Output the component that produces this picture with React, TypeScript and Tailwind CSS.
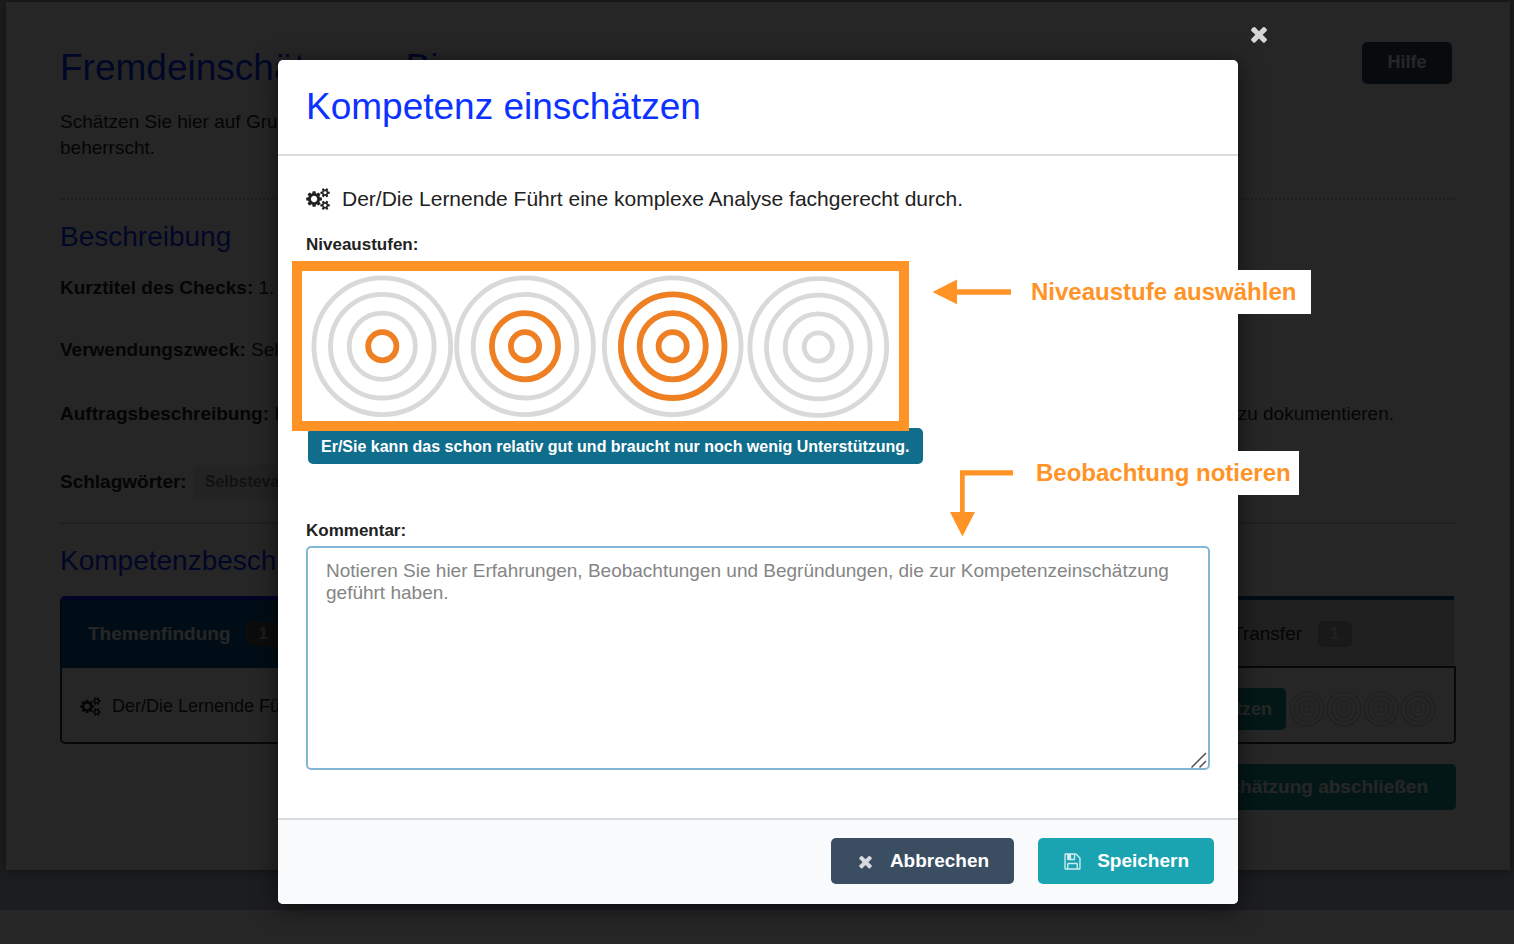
import React from "react";

const COGS =
  "M896 896q0-106-75-181t-181-75-181 75-75 181 75 181 181 75 181-75 75-181zm768 512q0-52-38-90t-90-38-90 38-38 90q0 53 37.5 90.5t90.5 37.5 90.5-37.5 37.5-90.5zm0-1024q0-52-38-90t-90-38-90 38-38 90q0 53 37.5 90.5t90.5 37.5 90.5-37.5 37.5-90.5zm-384 421v185q0 10-7 19.5t-16 10.5l-155 24q-11 35-32 76 34 48 90 115 7 11 7 20 0 12-7 19-23 30-82.5 89.5t-78.5 59.5q-11 0-21-7l-115-90q-37 19-77 31-11 108-23 155-7 24-30 24h-186q-11 0-20-7.5t-10-17.5l-23-153q-34-10-75-31l-118 89q-7 7-20 7-11 0-21-8-144-133-144-160 0-9 7-19 10-14 41-53t47-61q-23-44-35-82l-152-24q-10-1-17-9.5t-7-19.5v-185q0-10 7-19.5t16-10.5l155-24q11-35 32-76-34-48-90-115-7-11-7-20 0-12 7-20 22-30 82-89t79-59q11 0 21 7l115 90q34-18 77-32 11-108 23-154 7-24 30-24h186q11 0 20 7.5t10 17.5l23 153q34 10 75 31l118-89q8-7 20-7 11 0 21 8 144 133 144 160 0 8-7 19-12 16-42 54t-45 60q23 48 34 82l152 23q10 2 17 10.5t7 19.5zm640 533v140q0 16-149 31-12 27-30 52 51 113 51 138 0 4-4 7-122 71-124 71-8 0-46-47t-52-68q-20 2-30 2t-30-2q-14 21-52 68t-46 47q-2 0-124-71-4-3-4-7 0-25 51-138-18-25-30-52-149-15-149-31v-140q0-16 149-31 13-29 30-52-51-113-51-138 0-4 4-7 4-2 35-20t59-34 30-16q8 0 46 46.5t52 67.5q20-2 30-2t30 2q51-71 92-112l6-2q4 0 124 70 4 3 4 7 0 25-51 138 17 23 30 52 149 15 149 31zm0-1024v140q0 16-149 31-12 27-30 52 51 113 51 138 0 4-4 7-122 71-124 71-8 0-46-47t-52-68q-20 2-30 2t-30-2q-14 21-52 68t-46 47q-2 0-124-71-4-3-4-7 0-25 51-138-18-25-30-52-149-15-149-31v-140q0-16 149-31 13-29 30-52-51-113-51-138 0-4 4-7 4-2 35-20t59-34 30-16q8 0 46 46.5t52 67.5q20-2 30-2t30 2q51-71 92-112l6-2q4 0 124 70 4 3 4 7 0 25-51 138 17 23 30 52 149 15 149 31z";
const TIMES =
  "M1490 1322q0 40-28 68l-136 136q-28 28-68 28t-68-28l-294-294-294 294q-28 28-68 28t-68-28l-136-136q-28-28-28-68t28-68l294-294-294-294q-28-28-28-68t28-68l136-136q28-28 68-28t68 28l294 294 294-294q28-28 68-28t68 28l136 136q28 28 28 68t-28 68l-294 294 294 294q28 28 28 68z";
const FLOPPY =
  "M512 1536h768v-384h-768v384zm896 0h128v-896q0-14-10-38.5t-20-34.5l-281-281q-10-10-34-20t-39-10v416q0 40-28 68t-68 28h-576q-40 0-68-28t-28-68v-416h-128v1280h128v-416q0-40 28-68t68-28h832q40 0 68 28t28 68v416zm-384-928v-320q0-13-9.5-22.5t-22.5-9.5h-192q-13 0-22.5 9.5t-9.5 22.5v320q0 13 9.5 22.5t22.5 9.5h192q13 0 22.5-9.5t9.5-22.5zm640 32v928q0 40-28 68t-68 28h-1344q-40 0-68-28t-28-68v-1344q0-40 28-68t68-28h928q40 0 88 20t76 48l280 280q28 28 48 76t20 88z";

function Glyph({ path, box = "0 0 1792 1792", className }: { path: string; box?: string; className: string }) {
  return (
    <svg viewBox={box} fill="currentColor" aria-hidden="true" className={className}>
      <path d={path} />
    </svg>
  );
}

const RADII = [14.1, 33.1, 51.8, 68.4];

function Rings({ cx, cy, filled }: { cx: number; cy: number; filled: number }) {
  return (
    <>
      {RADII.map((r, i) => (
        <circle
          key={r}
          cx={cx}
          cy={cy}
          r={r}
          fill="none"
          stroke={i < filled ? "#ee7f22" : "#d9d9d9"}
          strokeWidth={i < filled ? 5.8 : 4.8}
        />
      ))}
    </>
  );
}

const levels = [
  { width: 142, cx: 71.3, cy: 75.2, filled: 1 },
  { width: 147, cx: 72, cy: 75.2, filled: 2 },
  { width: 146, cx: 72.7, cy: 75.2, filled: 3 },
  { width: 144, cx: 72.3, cy: 76, filled: 0 },
];

function Background() {
  return (
    <div className="bg-[#bcc2cc] pt-0.5 pr-1 pb-10 pl-1.5">
      <main className="bg-white px-[54px] pt-10 pb-[60px] text-[19px] leading-[26px] text-[#222] shadow-[0_0_12px_rgba(0,0,0,0.5)]">
        <div className="flex items-start justify-between pr-1">
          <div>
            <h1 className="mt-1 text-[37px] leading-[44px] text-[#0b32ff]">Fremdeinschätzung: Bi</h1>
            <p className="mt-[19px]">
              Schätzen Sie hier auf Grundlage
              <br />
              beherrscht.
            </p>
          </div>
          <button type="button" className="h-[42px] w-[90px] rounded-[5px] bg-[#34495e] pb-0.5 text-[18px] font-bold text-white">
            Hilfe
          </button>
        </div>

        <hr className="mt-[37px] border-0 border-t-2 border-dotted border-[#c8c8c8]" />
        <h2 className="mt-[19px] text-[28px] leading-9 text-[#0b32ff]">Beschreibung</h2>
        <p className="mt-5">
          <b>Kurztitel des Checks:</b> 1. Selbst
        </p>
        <p className="mt-9">
          <b>Verwendungszweck:</b> Selbst
        </p>
        <p className="mt-[38px] flex justify-between pr-[62px]">
          <span>
            <b>Auftragsbeschreibung:</b> In
          </span>
          <span>zu dokumentieren.</span>
        </p>
        <div className="mt-[38px] flex items-center gap-1.5">
          <b>Schlagwörter:</b>
          <span className="rounded-[5px] bg-[#ececec] px-3 py-1 text-[16px] font-bold text-[#7a7a7a]">Selbstevaluation</span>
        </div>
        <hr className="mt-[23px] border-0 border-t-2 border-[#d4d4d4]" />
        <h2 className="mt-[19px] text-[28px] leading-9 text-[#0b32ff]">Kompetenzbeschreibung</h2>

        <section className="mt-[17px]">
          <div className="flex pr-0.5">
            <div className="relative z-10 flex h-[72px] w-[348px] items-center gap-4 rounded-tl-[5px] border-t-4 border-l-2 border-t-[#1010ff] border-l-[#00406c] bg-[#005692] px-[26px] font-bold text-white">
              Themenfindung
              <span className="rounded-[5px] bg-[#555] px-3 text-[17px] leading-6 text-[#bbb]">1</span>
            </div>
            <div className="flex-1 border-t-4 border-[#005692] bg-[#d6d6d6]" />
            <div className="flex h-[72px] w-[250px] items-center gap-4 border-t-4 border-[#005692] bg-[#d6d6d6] px-7">
              Transfer
              <span className="rounded-[5px] bg-[#a5a5a5] px-3 text-[17px] font-bold text-[#ddd]">1</span>
            </div>
          </div>
          <div className="relative -mt-0.5 flex items-center justify-between rounded-b-[5px] border-2 border-[#2c3e50] px-[18px] pt-5 pb-3">
            <div className="flex items-center gap-[11px] pb-1.5 text-[18px]">
              <Glyph path={COGS} box="0 0 1920 1792" className="h-[19px] w-[21px]" />
              Der/Die Lernende Führt
            </div>
            <div className="flex items-center gap-1">
              <button type="button" className="h-[42px] rounded-[5px] bg-[#109b94] px-3.5 text-[18px] font-bold text-white">
                Einschätzen
              </button>
              <svg viewBox="0 0 146 36" className="h-9 w-[146px]" aria-hidden="true">
                {[17, 54, 91, 128].map((x) => (
                  <g key={x} fill="none" stroke="#cfcfcf" strokeWidth="1.2">
                    <circle cx={x} cy="18" r="3.5" />
                    <circle cx={x} cy="18" r="8" />
                    <circle cx={x} cy="18" r="12.5" />
                    <circle cx={x} cy="18" r="17" />
                  </g>
                ))}
              </svg>
            </div>
          </div>
          <div className="mt-5 flex justify-end">
            <button type="button" className="h-[46px] rounded-[5px] bg-[#109b94] px-7 font-bold text-white">
              Fremdeinschätzung abschließen
            </button>
          </div>
        </section>
      </main>
    </div>
  );
}

function Annotations() {
  return (
    <>
      <svg viewBox="0 0 80 26" className="absolute top-[219px] left-[654px] h-[26px] w-20" aria-hidden="true">
        <path d="M0.5 13 25 0.5V10.3H79V15.7H25V25.2Z" fill="#ff9326" />
      </svg>
      <p className="absolute top-[210px] left-[745px] bg-white py-2 pr-[15px] pl-2 text-[24px] leading-7 font-bold whitespace-nowrap text-[#ff9326]">
        Niveaustufe auswählen
      </p>
      <svg viewBox="0 0 64 68" className="absolute top-[410px] left-[672px] h-[68px] w-16" aria-hidden="true">
        <path d="M63 0.2V5.6H14.7V42H25L12.4 66.5 0 42H10V0.2Z" fill="#ff9326" />
      </svg>
      <p className="absolute top-[391px] left-[750px] bg-white px-2 py-2 text-[24px] leading-7 font-bold whitespace-nowrap text-[#ff9326]">
        Beobachtung notieren
      </p>
    </>
  );
}

export default function App() {
  return (
    <div className="relative min-h-screen bg-white font-['Liberation_Sans',Arial,sans-serif]">
      <Background />

      <div className="absolute inset-0 z-20 flex items-start justify-center bg-black/85 pt-[60px] pl-0.5">
        <div
          role="dialog"
          aria-labelledby="dialog-title"
          className="relative w-full max-w-[960px] rounded-[5px] bg-white text-[#222] shadow-[0_4px_24px_rgba(0,0,0,0.6)]"
        >
          <button type="button" aria-label="Schließen" className="absolute -top-[38px] -right-[33px] text-[#d6d6d6]">
            <Glyph path={TIMES} className="size-6" />
          </button>

          <header className="border-b-2 border-[#dcdcdc] px-7 py-[25px]">
            <h1 id="dialog-title" className="text-[37px] leading-[44px] text-[#0b32ff]">
              Kompetenz einschätzen
            </h1>
          </header>

          <div className="px-7 pt-7 pb-12">
            <p className="flex items-center gap-3 text-[21px] leading-[30px]">
              <Glyph path={COGS} box="0 0 1920 1792" className="h-[22px] w-6" />
              Der/Die Lernende Führt eine komplexe Analyse fachgerecht durch.
            </p>
            <p className="mt-[19px] text-[17px] leading-6 font-bold">Niveaustufen:</p>
            <div className="relative z-10 mt-1 -ml-3.5 flex w-[617px] max-w-full border-10 border-[#ff9326] bg-white pl-[9px]">
              {levels.map((level, i) => (
                <button key={i} type="button" aria-label={`Niveaustufe ${i + 1}`}>
                  <svg
                    viewBox={`0 0 ${level.width} 150`}
                    className="block h-[150px]"
                    style={{ width: level.width }}
                    aria-hidden="true"
                  >
                    <Rings cx={level.cx} cy={level.cy} filled={level.filled} />
                  </svg>
                </button>
              ))}
            </div>
            <div className="-mt-[3px] ml-0.5 flex">
              <span className="rounded-[5px] bg-[#116d8c] px-[13px] pt-[7px] pb-[5px] text-[16px] leading-6 font-bold text-white">
                Er/Sie kann das schon relativ gut und braucht nur noch wenig Unterstützung.
              </span>
            </div>
            <label htmlFor="comment" className="mt-[55px] block text-[17px] leading-6 font-bold">
              Kommentar:
            </label>
            <div className="relative mt-[3px]">
              <textarea
                id="comment"
                placeholder="Notieren Sie hier Erfahrungen, Beobachtungen und Begründungen, die zur Kompetenzeinschätzung geführt haben."
                className="block h-[224px] w-full resize-none rounded-[5px] border-2 border-[#84b6d6] px-[18px] py-3 text-[19px] leading-[22px] outline-none placeholder:text-[#858585]"
              />
              <svg
                viewBox="0 0 16 16"
                className="pointer-events-none absolute right-[3px] bottom-0.5 size-4"
                fill="none"
                stroke="#505050"
                strokeWidth="1.5"
                aria-hidden="true"
              >
                <path d="M0.5 15.5 15 1M8.5 15.5 15 9" />
              </svg>
            </div>
          </div>

          <footer className="flex justify-end gap-6 rounded-b-[5px] border-t-2 border-[#d8dadc] bg-[#f9fafc] px-6 pt-[18px] pb-5 text-[19px] font-bold text-white">
            <button type="button" className="flex h-[46px] items-center gap-[15px] rounded-[5px] bg-[#3a4d61] px-[25px]">
              <Glyph path={TIMES} className="size-[19px] opacity-80" />
              Abbrechen
            </button>
            <button type="button" className="flex h-[46px] items-center gap-[15px] rounded-[5px] bg-[#1aa3b1] px-[25px]">
              <Glyph path={FLOPPY} className="size-[19px] opacity-80" />
              Speichern
            </button>
          </footer>

          <Annotations />
        </div>
      </div>
    </div>
  );
}
